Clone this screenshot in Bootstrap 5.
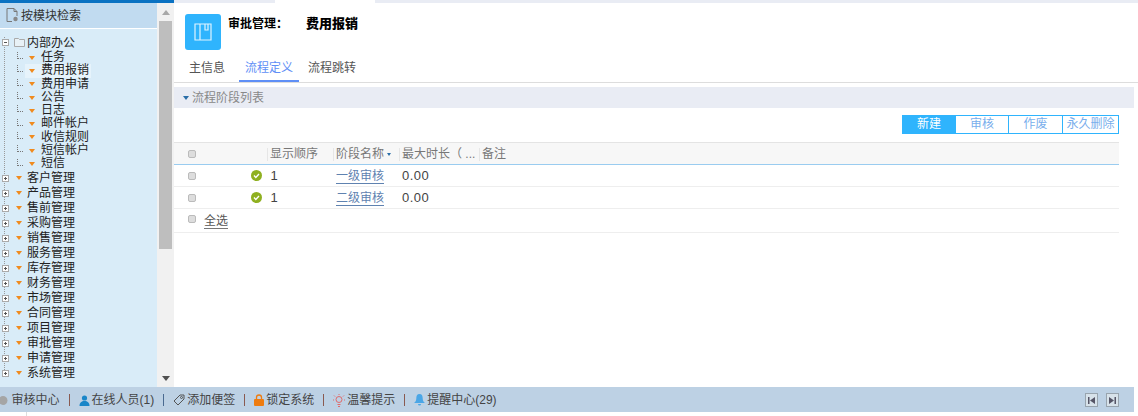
<!DOCTYPE html>
<html lang="zh"><head><meta charset="utf-8"><title>费用报销</title>
<link href="https://cdn.jsdelivr.net/npm/bootstrap@5.3.0/dist/css/bootstrap.min.css" rel="stylesheet">
<style>
html,body{height:416px;overflow:hidden;background:#fff}
body{font-family:"Liberation Sans","Noto Sans CJK SC",sans-serif;font-size:12px;color:#333;width:1138px}
.shell{height:387px}
.side{width:174px;flex:none;background:#f1f1f1}
.topline{height:3px;background:#0a72c2}
.panel{width:157px;flex:none;background:#d9ecf8;overflow:hidden}
.panel-h{height:26px;background:#c1dbf0;border-bottom:1px solid #fff;color:#333;padding-left:6px;gap:2px}
.tree{padding-top:5px;color:#222;font-size:12px;background:repeating-linear-gradient(#999 0 1px,transparent 1px 2px) 4px 8px/1px 340px no-repeat}
.node{height:15px;line-height:15px;padding-left:2px;white-space:nowrap}
.node.open{height:17px;line-height:16px}
.leaf{height:13.3px;line-height:13.3px;padding-left:17px;white-space:nowrap}
.lab{display:flex;align-items:center}
.leaf.on .lab{background:#e6f3fb;width:66px;height:14px;padding-left:4px}
.leaf.on .elbow{margin-right:2px}
.plus{width:7px;height:7px;border:1px solid #aaa;background:#fff;flex:none;margin-right:7px;position:relative}
.plus::before{content:"";position:absolute;left:1px;right:1px;top:2px;height:1px;background:#555}
.plus.closed::after{content:"";position:absolute;top:1px;bottom:1px;left:2px;width:1px;background:#555}
.open .plus{margin-right:5px}
.folder{margin-right:2px;flex:none}
.elbow{width:6px;height:7px;border-left:1px dotted #777;border-bottom:1px dotted #777;flex:none;margin-right:6px;margin-top:-4px}
.caret{width:0;height:0;border-left:3px solid transparent;border-right:3px solid transparent;border-top:4px solid #f08a1d;flex:none;margin-right:6px}
.node .caret{margin-right:5px}
.scroll{width:17px;flex:none;padding:0 2px}
.thumb{height:228px;background:#bebebe}
.arrow-up,.arrow-dn{height:18px;align-items:center;justify-content:center}
.arrow-up::before{content:"";border:4px solid transparent;border-bottom:5px solid #a8a8a8;border-top:0}
.arrow-dn::before{content:"";border:4px solid transparent;border-top:5px solid #505050;border-bottom:0}
.spacer{flex:1}
.main{flex:1;min-width:0}
.main-top{height:3px;background:#e9ecf4}
.main-top span{display:block;width:100px;height:3px;background:#fff;margin-left:101px}
.head{height:50px;padding:11px 0 0 11px}
.logo{width:36px;height:36px;border-radius:3px;background:#2fb4fd;flex:none}
.title{font-size:12px;font-weight:700;color:#000;margin-left:7px;margin-top:2px;line-height:16px}
.title b{margin-left:18px;font-size:13px}
.tabbar{height:30px;border-bottom:1px solid #ddd;font-size:12px;white-space:nowrap}
.tabx{height:29px;line-height:30px;color:#555;flex:none}
.tabx.first{width:65px;padding-left:15px}
.tabx.cur{color:#5f8ff6;border-bottom:2px solid #5f8ff6;width:60px;padding-left:6px}
.tabx.last{padding-left:9px}
.band{height:21px;margin-top:4px;background:#e9ecf4;color:#888;font-size:12px;padding-left:9px;width:960px}
.band i{display:block;border:3px solid transparent;border-top:4px solid #2a6ea8;border-bottom:0;margin-right:3px}
.actions{padding-top:7px;width:945px;height:34px}
.act{height:19px;border:1px solid #2fb4fd;border-left-width:0;background:#fff;color:#79aeec;font-size:12px;line-height:17px;text-align:center;padding:0}
.act:first-child{border-left-width:1px}
.act.pri{background:#2fb4fd;color:#fff}
.w54{width:54px}.w53{width:53px}.w56{width:56px}
.grid-t{width:945px;border-collapse:separate;border-spacing:0;table-layout:fixed;margin-bottom:0;font-size:12px;color:#444}
.c1{width:93px}.c2{width:66px}.c3{width:66px}.c4{width:80px}
.table.grid-t>*>*>*{padding:0;vertical-align:middle;white-space:nowrap;overflow:hidden;background:transparent;box-shadow:none;font-weight:400;color:inherit}
.table.grid-t>thead>tr>th{height:23px;background:#f7f7f7;border-top:1px solid #e4e4e4;border-bottom:1px solid #9accf0;color:#777}
.table.grid-t>tbody>tr>td{height:22px;border-bottom:1px solid #eee;font-size:13px}
.table.grid-t>tbody>tr>td.allrow{height:24px}
.table.grid-t>tbody>tr>td.num{letter-spacing:.5px;padding-left:3px}
.sep{border-left:1px solid #e6e6e6;padding-left:2px;display:inline-block;line-height:13px}
.chk{display:block;flex:none;width:8px;height:8px;background:#ddd;border:1px solid #bbb;border-radius:2px;margin-left:14px}
.ok{display:block;width:11px;height:11px;margin-left:auto;margin-right:5px}
.lnk{color:#5f82b0;border-bottom:1px solid #5f82b0;line-height:14px;display:inline-block;font-size:12px;margin-left:3px}
.sortc{display:inline-block;border:2.5px solid transparent;border-top:3px solid #2a6ea8;border-bottom:0;margin-left:3px;vertical-align:middle}
.all{color:#555;border-bottom:1px solid #777;font-size:12px;line-height:13px;display:inline-block;margin-top:3px}
.allchk{margin-right:8px;margin-top:-4px}
.foot{height:25px;background:#bdd1e4;width:1134px;font-size:12px;color:#444;white-space:nowrap;padding-top:1px}
.fi{display:inline-flex;align-items:center;gap:2px}
.dot{margin-right:3.5px;flex:none;margin-left:-1px}
.bar{width:1px;height:12px;background:#8a5a50;margin:0 9px 0 9px;flex:none}
.bar.bl{background:#4a6a90}
.pg{width:13px;height:14px;border:1px solid #98a4ae;background:#d7e2ea;display:flex;align-items:center;justify-content:center;margin-left:8px}
.pg.end{margin-right:15px}
.tail{height:4px}
.tail span{display:block;width:1px;height:4px;background:#ddd;margin-left:26px}
</style></head><body>
<div class="d-flex shell">
  <div class="side d-flex flex-column">
    <div class="topline"></div>
    <div class="d-flex flex-grow-1 overflow-hidden">
      <div class="panel">
        <div class="panel-h d-flex align-items-center">
          <svg width="13" height="15" viewBox="0 0 13 15" fill="none" stroke="#777"><path d="M1 .5h7l3 3V8M6 13.5H1V.5M8 .5v3h3"/><circle cx="9.5" cy="11" r="2.2" fill="#888" stroke="none"/></svg>
          <span>按模块检索</span>
        </div>
        <div class="tree">
          <div class="node open d-flex align-items-center"><span class="plus"></span><svg class="folder" width="11" height="9" viewBox="0 0 11 9" fill="#e8f1f6" stroke="#aaa"><path d="M.5 8.500V.5h4l1 1h5v7z"/></svg><span>内部办公</span></div>
          <div class="leaf d-flex align-items-center"><i class="elbow"></i><i class="caret"></i><span>任务</span></div>
          <div class="leaf on d-flex align-items-center"><i class="elbow"></i><div class="lab"><i class="caret"></i><span>费用报销</span></div></div>
          <div class="leaf d-flex align-items-center"><i class="elbow"></i><i class="caret"></i><span>费用申请</span></div>
          <div class="leaf d-flex align-items-center"><i class="elbow"></i><i class="caret"></i><span>公告</span></div>
          <div class="leaf d-flex align-items-center"><i class="elbow"></i><i class="caret"></i><span>日志</span></div>
          <div class="leaf d-flex align-items-center"><i class="elbow"></i><i class="caret"></i><span>邮件帐户</span></div>
          <div class="leaf d-flex align-items-center"><i class="elbow"></i><i class="caret"></i><span>收信规则</span></div>
          <div class="leaf d-flex align-items-center"><i class="elbow"></i><i class="caret"></i><span>短信帐户</span></div>
          <div class="leaf d-flex align-items-center"><i class="elbow"></i><i class="caret"></i><span>短信</span></div>
          <div class="node d-flex align-items-center"><span class="plus closed"></span><i class="caret"></i><span>客户管理</span></div>
          <div class="node d-flex align-items-center"><span class="plus closed"></span><i class="caret"></i><span>产品管理</span></div>
          <div class="node d-flex align-items-center"><span class="plus closed"></span><i class="caret"></i><span>售前管理</span></div>
          <div class="node d-flex align-items-center"><span class="plus closed"></span><i class="caret"></i><span>采购管理</span></div>
          <div class="node d-flex align-items-center"><span class="plus closed"></span><i class="caret"></i><span>销售管理</span></div>
          <div class="node d-flex align-items-center"><span class="plus closed"></span><i class="caret"></i><span>服务管理</span></div>
          <div class="node d-flex align-items-center"><span class="plus closed"></span><i class="caret"></i><span>库存管理</span></div>
          <div class="node d-flex align-items-center"><span class="plus closed"></span><i class="caret"></i><span>财务管理</span></div>
          <div class="node d-flex align-items-center"><span class="plus closed"></span><i class="caret"></i><span>市场管理</span></div>
          <div class="node d-flex align-items-center"><span class="plus closed"></span><i class="caret"></i><span>合同管理</span></div>
          <div class="node d-flex align-items-center"><span class="plus closed"></span><i class="caret"></i><span>项目管理</span></div>
          <div class="node d-flex align-items-center"><span class="plus closed"></span><i class="caret"></i><span>审批管理</span></div>
          <div class="node d-flex align-items-center"><span class="plus closed"></span><i class="caret"></i><span>申请管理</span></div>
          <div class="node d-flex align-items-center"><span class="plus closed"></span><i class="caret"></i><span>系统管理</span></div>
        </div>
      </div>
      <div class="scroll d-flex flex-column">
        <div class="arrow-up d-flex"></div>
        <div class="thumb"></div>
        <div class="spacer"></div>
        <div class="arrow-dn d-flex"></div>
      </div>
    </div>
  </div>
  <div class="main">
    <div class="main-top"><span></span></div>
    <div class="head d-flex align-items-start">
      <div class="logo d-flex align-items-center justify-content-center">
        <svg width="18" height="18" viewBox="0 0 18 18" fill="none" stroke="#dff3ff" stroke-width="1.2"><path d="M1 1h16v16H1zM6 1v16M11 1v6h3V1"/></svg>
      </div>
      <div class="title">审批管理：<b>费用报销</b></div>
    </div>
    <div class="tabbar d-flex">
      <div class="tabx first">主信息</div>
      <div class="tabx cur">流程定义</div>
      <div class="tabx last">流程跳转</div>
    </div>
    <div class="band d-flex align-items-center"><i></i>流程阶段列表</div>
    <div class="actions d-flex justify-content-end">
      <button class="act pri w54" type="button">新建</button>
      <button class="act w53" type="button">审核</button>
      <button class="act w54" type="button">作废</button>
      <button class="act w56" type="button">永久删除</button>
    </div>
    <table class="table grid-t">
      <colgroup><col class="c1"><col class="c2"><col class="c3"><col class="c4"><col></colgroup>
      <thead><tr>
        <th><i class="chk"></i></th>
        <th><span class="sep">显示顺序</span></th>
        <th><span class="sep">阶段名称</span><i class="sortc"></i></th>
        <th><span class="sep">最大时长（ ...</span></th>
        <th><span class="sep">备注</span></th>
      </tr></thead>
      <tbody>
        <tr><td><div class="d-flex align-items-center"><i class="chk"></i><svg class="ok" viewBox="0 0 11 11"><circle cx="5.5" cy="5.5" r="5.5" fill="#8fb020"/><path d="M3 5.6l1.8 1.8L8 4" fill="none" stroke="#fff" stroke-width="1.4"/></svg></div></td><td>&nbsp;1</td><td><span class="lnk">一级审核</span></td><td class="num">0.00</td><td></td></tr>
        <tr><td><div class="d-flex align-items-center"><i class="chk"></i><svg class="ok" viewBox="0 0 11 11"><circle cx="5.5" cy="5.5" r="5.5" fill="#8fb020"/><path d="M3 5.6l1.8 1.8L8 4" fill="none" stroke="#fff" stroke-width="1.4"/></svg></div></td><td>&nbsp;1</td><td><span class="lnk">二级审核</span></td><td class="num">0.00</td><td></td></tr>
        <tr><td colspan="5" class="allrow"><div class="d-flex align-items-center"><i class="chk allchk"></i><span class="all">全选</span></div></td></tr>
      </tbody>
    </table>
  </div>
</div>
<div class="foot d-flex align-items-center">
  <svg class="dot" width="9" height="11" viewBox="0 0 9 11"><circle cx="4" cy="5.500" r="4.500" fill="#a5a5a5"/></svg>
  <span class="fi">审核中心</span><span class="bar"></span>
  <span class="fi"><svg width="11" height="11" viewBox="0 0 11 11" fill="#1a86c8"><circle cx="5.5" cy="3" r="2.6"/><path d="M.5 11c0-3.500 2-5 5-5s5 1.500 5 5z"/></svg>在线人员(1)</span><span class="bar bl"></span>
  <span class="fi"><svg width="12" height="12" viewBox="0 0 12 12" fill="none" stroke="#555"><path d="M1 7l6-6h4v4l-6 6z"/><circle cx="8.500" cy="3.500" r="1"/></svg>添加便签</span><span class="bar"></span>
  <span class="fi"><svg width="10" height="12" viewBox="0 0 10 12"><path d="M2.500 6V3.500a2.500 2.500 0 0 1 5 0V6" fill="none" stroke="#ee7c10" stroke-width="1.300"/><rect y="5" width="10" height="7" rx="1" fill="#ee7c10"/></svg>锁定系统</span><span class="bar"></span>
  <span class="fi"><svg width="12" height="13" viewBox="0 0 12 13" fill="none" stroke="#e06a6a"><circle cx="6" cy="5.500" r="3"/><path d="M4.500 10.500h3M5 12.500h2M6 0v1M1 1.500l1 1M11 1.500l-1 1M0 6h1M11 6h1"/></svg>温馨提示</span><span class="bar"></span>
  <span class="fi"><svg width="11" height="12" viewBox="0 0 11 12" fill="#4aa6e6"><path d="M5.500 0C3 0 2.300 2 2.300 4.500c0 2-1 3.500-2.300 4.500h11c-1.300-1-2.300-2.500-2.300-4.500C8.700 2 8 0 5.500 0zM4 10h3a1.500 1.500 0 0 1-3 0z"/></svg>提醒中心(29)</span>
  <div class="spacer"></div>
  <span class="pg"><svg width="7" height="7" viewBox="0 0 7 7" fill="#556"><path d="M0 0h1.500v7H0zM7 0v7L2 3.500z"/></svg></span>
  <span class="pg end"><svg width="7" height="7" viewBox="0 0 7 7" fill="#556"><path d="M7 0H5.500v7H7zM0 0v7l5-3.500z"/></svg></span>
</div>
<div class="tail"><span></span></div>
</body></html>
